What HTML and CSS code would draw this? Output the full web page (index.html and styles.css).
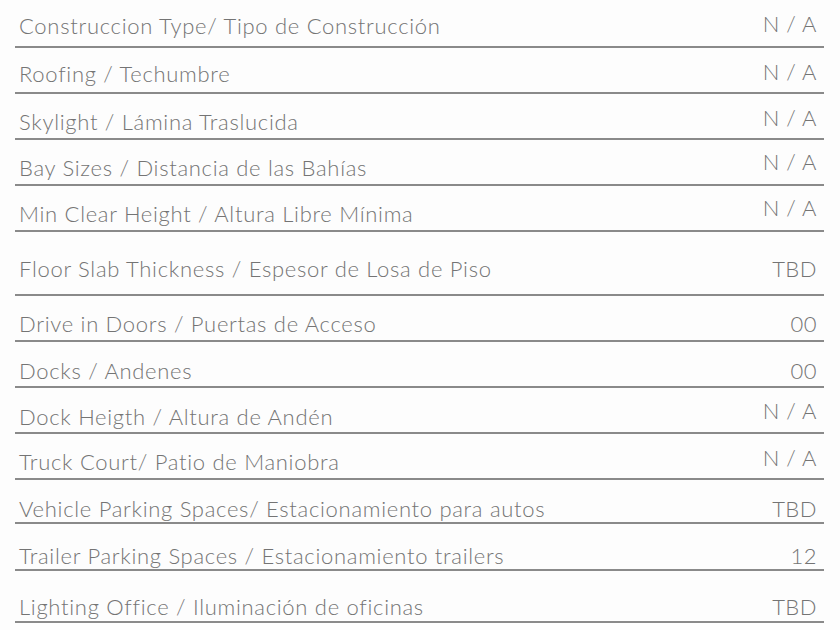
FILE: index.html
```html
<!DOCTYPE html>
<html>
<head>
<meta charset="utf-8">
<link rel="stylesheet" href="styles.css">
</head>
<body>
<div class="table">
  <div class="row first"><span class="label">Construccion Type/ Tipo de Construcción</span><span class="value up1">N / A</span></div>
  <div class="row second"><span class="label">Roofing / Techumbre</span><span class="value up1">N / A</span></div>
  <div class="row"><span class="label">Skylight / Lámina Traslucida</span><span class="value up2">N / A</span></div>
  <div class="row"><span class="label">Bay Sizes / Distancia de las Bahías</span><span class="value up3">N / A</span></div>
  <div class="row"><span class="label">Min Clear Height / Altura Libre Mínima</span><span class="value up3">N / A</span></div>
  <div class="row tall"><span class="label">Floor Slab Thickness / Espesor de Losa de Piso</span><span class="value">TBD</span></div>
  <div class="row"><span class="label">Drive in Doors / Puertas de Acceso</span><span class="value">00</span></div>
  <div class="row snug"><span class="label">Docks / Andenes</span><span class="value">00</span></div>
  <div class="row snug"><span class="label">Dock Heigth / Altura de Andén</span><span class="value up3">N / A</span></div>
  <div class="row"><span class="label">Truck Court/ Patio de Maniobra</span><span class="value up2">N / A</span></div>
  <div class="row short"><span class="label">Vehicle Parking Spaces/ Estacionamiento para autos</span><span class="value">TBD</span></div>
  <div class="row low"><span class="label">Trailer Parking Spaces / Estacionamiento trailers</span><span class="value">12</span></div>
  <div class="row last"><span class="label">Lighting Office / Iluminación de oficinas</span><span class="value">TBD</span></div>
</div>
</body>
</html>
```
FILE: styles.css
```css
html, body {
  margin: 0;
  padding: 0;
  background: #fdfdfd;
}
.table {
  width: 809px;
  margin-left: 15px;
  display: flex;
  flex-direction: column;
  font-family: "Lato", "Open Sans", sans-serif;
  font-weight: 300;
  font-size: 22px;
  letter-spacing: 0.7px;
  color: #747474;
}
.row {
  box-sizing: border-box;
  height: 46px;
  display: flex;
  justify-content: space-between;
  align-items: flex-end;
  padding: 0 7px 3px 4px;
  border-bottom: 2px solid #8a8a8a;
}
.row.first { height: 48px; padding-bottom: 7px; }
.row.second { padding-bottom: 5px; }
.row.tall { height: 64px; padding-bottom: 12px; }
.row.snug { padding-bottom: 2px; }
.row.short { height: 44px; padding-bottom: 0; }
.row.low { height: 47px; padding-bottom: 0; }
.row.last { height: 52px; padding-bottom: 1px; }
.label { line-height: 26px; }
.value { line-height: 26px; letter-spacing: 0.5px; }
.up1 { margin-bottom: 2px; }
.up2 { margin-bottom: 4px; }
.up3 { margin-bottom: 6px; }
```
